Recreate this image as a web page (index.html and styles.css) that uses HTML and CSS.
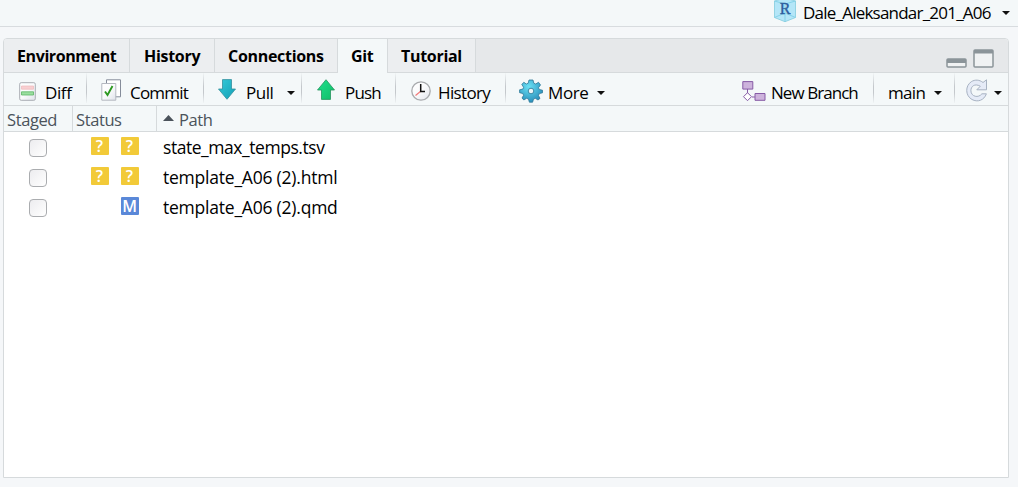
FILE: index.html
```html
<!DOCTYPE html>
<html lang="en">
<head>
<meta charset="utf-8">
<title>Git pane</title>
<link rel="stylesheet" href="styles.css">
</head>
<body>
<svg width="0" height="0" class="defs">
  <defs>
    <linearGradient id="teal" x1="0" y1="0" x2="1" y2="1"><stop offset="0" stop-color="#35cad9"/><stop offset="1" stop-color="#139fb5"/></linearGradient>
    <linearGradient id="green" x1="0" y1="0" x2="1" y2="1"><stop offset="0" stop-color="#20e08d"/><stop offset="1" stop-color="#10bd68"/></linearGradient>
    <radialGradient id="gear" cx=".4" cy=".3" r=".75"><stop offset="0" stop-color="#6be0f4"/><stop offset="1" stop-color="#258bb8"/></radialGradient>
    <linearGradient id="paper" x1="0" y1="0" x2="1" y2="1"><stop offset="0" stop-color="#fff"/><stop offset=".5" stop-color="#fafbfc"/><stop offset="1" stop-color="#dfe2ea"/></linearGradient>
  </defs>
</svg>
<header class="topbar">
  <svg class="cube" width="24" height="23" viewBox="0 0 24 23"><path d="M12-2 22.500 1v16.500L12 21.700 1.500 17.500V1z" fill="#b4e6f8" stroke="#8bcfe0" stroke-width=".9"/><path d="M1.500 1 12 4l10.500-3M12 4v17.500M1.500 17.500 12 13l10.500 4.500" fill="none" stroke="#7fd0e6" stroke-width=".9"/><text x="12" y="14" text-anchor="middle" class="cube-r">R</text></svg>
  <span class="label project">Dale_Aleksandar_201_A06</span>
  <i class="caret"></i>
</header>
<main class="pane">
  <nav class="tabs">
    <span class="tab environment">Environment</span>
    <span class="tab history-tab">History</span>
    <span class="tab connections">Connections</span>
    <span class="tab git active">Git</span>
    <span class="tab tutorial">Tutorial</span>
    <span class="window-buttons">
      <svg width="21" height="10" viewBox="0 0 21 10"><rect x="1" y="1" width="19" height="8" rx="1" fill="#f0f2f3" stroke="#8b9499" stroke-width="1.500"/><path d="M1 1h19v4H1z" fill="#8b9499"/></svg>
      <svg width="21" height="19" viewBox="0 0 21 19"><rect x="1" y="1" width="19" height="17" rx="1" fill="#f0f2f3" stroke="#8b9499" stroke-width="1.500"/><path d="M1 1h19v3.500H1z" fill="#8b9499"/></svg>
    </span>
  </nav>
  <div class="toolbar">
    <div class="tool diff">
      <svg width="17" height="19" viewBox="0 0 17 19"><rect x=".7" y=".7" width="15.600" height="17.600" rx="1.500" fill="url(#paper)" stroke="#a9adb3"/><path d="M2.500 4h12v3.200h-12z" fill="#f8cfd1" stroke="#efb7ba" stroke-width=".7"/><path d="M2.500 9.800h12V13h-12z" fill="#9ade9f" stroke="#5cb566" stroke-width=".8"/></svg>
      <span class="label">Diff</span>
    </div>
    <div class="tool commit">
      <svg width="20" height="22" viewBox="0 0 20 22"><path d="M5.500.8h14v17h-14z" fill="#fff" stroke="#858c9a"/><path d="M.8 4.500h14v16.700H.8z" fill="url(#paper)" stroke="#b4b8c0"/><path d="m4 12.500 2.500 3.500L11.500 7" fill="none" stroke="#2c9820" stroke-width="1.900"/></svg>
      <span class="label">Commit</span>
    </div>
    <div class="tool pull">
      <svg width="18" height="21" viewBox="0 0 18 21"><path d="M4.500.6h9v9.400h4L9 20.300.5 10h4z" fill="url(#teal)" stroke="#338f9d" stroke-width=".8"/></svg>
      <span class="label">Pull</span><i class="caret"></i>
    </div>
    <div class="tool push">
      <svg width="18" height="21" viewBox="0 0 18 21"><path d="M4.500 20.400h9V11h4L9 .7.5 11h4z" fill="url(#green)" stroke="#26945e" stroke-width=".8"/></svg>
      <span class="label">Push</span>
    </div>
    <div class="tool history">
      <svg width="20" height="20" viewBox="0 0 20 20"><circle cx="10" cy="10" r="9.200" fill="url(#paper)" stroke="#a9abae" stroke-width="1.300"/><path d="m10 10-5.500 4.500" stroke="#f27979" stroke-width="1.200"/><path d="M9.700 3v7.500H14" fill="none" stroke="#111" stroke-width="1.500"/></svg>
      <span class="label">History</span>
    </div>
    <div class="tool more">
      <svg width="24" height="24" viewBox="-12 -12 24 24"><path d="M-2-11h4l.8 3.200 1.900.8L7.500-8.700l2 2.600-2 2.800.8 1.800 3.200.7v2.600l-3.200.8L7.500 4.500 9 7.400 7 9 4.300 7.300 2.500 8.100 1.600 11.200h-3.200l-.9-3.100-1.900-.8L-7.200 9-9 7l1.600-2.700-.8-1.800-3.200-.8v-2.900l3.200-.7.800-1.800-1.800-2.800 2-2.200L-4.700-7l1.900-.8z" fill="url(#gear)" stroke="#2e7797" stroke-width=".8"/><circle r="2.800" fill="#edf6f8" stroke="#3c8aa6"/></svg>
      <span class="label">More</span><i class="caret"></i>
    </div>
    <div class="tool branch">
      <svg width="24" height="20" viewBox="0 0 24 20" fill="#cdb3dc" stroke="#865ba6"><path d="M5.500 8v4M10 16h3" fill="none"/><path d="M.8.600h10v7.500H.8zM13 12.500h10v6.800H13z"/><path d="m5.500 11.700 4 4-4 4-4-4z" fill="#fff"/></svg>
      <span class="label">New Branch</span>
    </div>
    <div class="tool branch-name"><span class="label">main</span><i class="caret"></i></div>
    <div class="tool refresh">
      <svg width="22" height="23" viewBox="0 0 22 23"><path d="M17 3.500 20.500.8v10h-9.700l3.500-3.600C8.500 4 4.800 7.500 4.900 11.800c.2 6 7.600 7.500 11 3h4.500C18 21.500 11.500 23.500 6 20.500-1 16.600-.8 6.700 5.300 2.700 9 .3 13.500.7 17 3.500z" fill="#e5ebf7" stroke="#a7b2c2"/></svg>
      <i class="caret"></i>
    </div>
  </div>
  <div class="row head"><span class="cell">Staged</span><span class="cell">Status</span><span class="cell path"><i class="sort"></i>Path</span></div>
  <div class="row"><i class="check"></i><span class="status"><b class="badge">?</b><b class="badge">?</b></span><span class="file tsv">state_max_temps.tsv</span></div>
  <div class="row"><i class="check"></i><span class="status"><b class="badge">?</b><b class="badge">?</b></span><span class="file html">template_A06 (2).html</span></div>
  <div class="row"><i class="check"></i><span class="status"><b class="badge modified">M</b></span><span class="file qmd">template_A06 (2).qmd</span></div>
</main>
</body>
</html>
```
FILE: styles.css
```css
* { box-sizing: border-box; }
body { margin: 0; width: 1018px; height: 487px; overflow: hidden; background: #f5f7f9; color: #000; font: 400 17px/24px "Open Sans", "Noto Sans", sans-serif; white-space: nowrap; }
svg { display: block; flex: none; overflow: visible; }
.defs { position: absolute; }
.topbar { height: 27px; display: flex; background: #f4f8f9; border-bottom: 1px solid #d8dcdf; padding-left: 773px; overflow: hidden; }
.cube-r { font: 16px "Liberation Serif", serif; fill: #2c5d9e; stroke: #2c5d9e; stroke-width: .4px; }
.project { width: 192px; margin: 1px 0 0 6px; letter-spacing: -.78px; }
.topbar .caret { margin: 11px 0 0 7px; }
.caret { width: 8px; height: 4px; flex: none; background: #111; clip-path: polygon(0 0, 100% 0, 50% 100%); }
.pane { width: 1006px; height: 440px; margin: 11px 0 0 3px; background: #fff; border: 1px solid #d6dadc; border-radius: 4px 4px 0 0; overflow: hidden; }
.tabs { height: 34px; display: flex; background: #e6e8ea; border-bottom: 1px solid #d6dadc; }
.tab { height: 33px; border-right: 1px solid #d6dadc; background: #eceef0; padding: 5px 0 0 13px; font-weight: 700; font-size: 16px; letter-spacing: -.3px; }
.environment { width: 126px; letter-spacing: -.4px; }
.history-tab { width: 85px; padding-left: 14px; }
.connections { width: 123px; }
.git { width: 50px; }
.tutorial { width: 88px; }
.tab.active { height: 34px; background: #f4f8f9; }
.window-buttons { margin: 10px 14px 0 auto; display: flex; align-items: flex-end; gap: 6px; height: 19px; }
.toolbar { height: 33px; display: flex; background: #f4f8f9; border-bottom: 1px solid #d6dadc; }
.tool { display: flex; align-items: flex-start; height: 30px; border-right: 1px solid; border-image: linear-gradient(#f4f8f9, #c4c8cc 45%, #c4c8cc 65%, #f4f8f9) 1; letter-spacing: -.4px; }
.tool .label { margin-top: 7px; }
.tool .caret { margin-top: 18px; }
.diff { width: 83px; padding: 9px 0 0 15px; }
.diff .label { margin: -1px 0 0 9px; letter-spacing: -.4px; }
.commit { width: 117px; padding: 6px 0 0 14px; }
.commit .label { margin: 2px 0 0 9px; letter-spacing: -.8px; }
.pull { width: 98px; padding: 6px 0 0 14px; }
.pull .label { margin: 2px 0 0 10px; width: 41px; letter-spacing: -.5px; }
.pull .caret { margin-top: 12px; }
.push { width: 94px; padding: 6px 0 0 15px; }
.push .label { margin: 2px 0 0 10px; letter-spacing: -.8px; }
.history { width: 110px; padding: 8px 0 0 15px; }
.history .label { margin: 0 0 0 7px; letter-spacing: -.65px; }
.more { width: 120px; padding: 6px 0 0 13px; border: 0; }
.more .label { margin: 2px 0 0 5px; width: 49px; }
.more .caret { margin-top: 12px; }
.branch { width: 137px; margin-left: auto; padding: 8px 0 0 5px; }
.branch .label { margin: 0 0 0 5px; letter-spacing: -.95px; }
.branch-name { width: 81px; padding-left: 14px; }
.branch-name .label { margin-top: 8px; width: 46px; letter-spacing: -.7px; }
.refresh { width: 53px; padding: 6px 0 0 11px; border: 0; }
.refresh .caret { margin: 12px 0 0 6px; }
.row { height: 30px; display: grid; grid-template-columns: 69px 84px 1fr; }
.head { height: 26px; background: #f4f8f9; border-bottom: 1px solid #d6dadc; margin-bottom: 1px; color: #4b535b; font-size: 16.500px; letter-spacing: -.4px; }
.cell { padding: 2px 0 0 3px; border-right: 1px solid #d6dadc; }
.cell.path { display: flex; gap: 5px; padding-left: 6px; border: 0; }
.sort { width: 11px; height: 6px; margin-top: 7px; background: #4b535b; clip-path: polygon(50% 0, 100% 100%, 0 100%); }
.check { width: 18px; height: 18px; margin: 6px 0 0 25px; border: 1.500px solid #aaacaf; border-radius: 4px; background: linear-gradient(135deg, #ececef, #fff); }
.status { display: flex; justify-content: flex-end; gap: 12px; padding: 4px 18.500px 0 0; }
.badge { width: 18px; height: 18px; border-radius: 1px; background: #f2ca38; color: #fff; text-align: center; font-size: 16px; line-height: 18px; font-weight: 600; letter-spacing: 0; }
.modified { background: #5a88d8; }
.file { padding: 2px 0 0 6px; font-size: 17.500px; letter-spacing: -.45px; }
.html, .qmd { letter-spacing: -.22px; }
```
